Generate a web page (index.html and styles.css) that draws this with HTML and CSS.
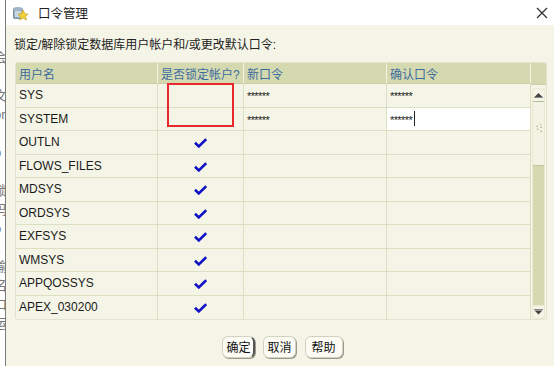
FILE: index.html
```html
<!DOCTYPE html>
<html lang="zh">
<head>
<meta charset="utf-8">
<link rel="stylesheet" href="styles.css">
</head>
<body>
<div class="backdrop">
  <div class="bg-text">
    <span>会</span><span>t</span><span>文</span><span>or</span><span>t</span><span>o</span><span>.</span><span>锁</span><span>吗</span><span>o</span><span>..</span><span>输</span><span>名</span><span>口</span><span>运</span>
  </div>
</div>
<div class="dialog">
  <div class="titlebar">
    <svg class="app-icon" width="16" height="16" viewBox="0 0 16 16">
      <rect x="1" y="3" width="10" height="11" rx="2" fill="#6f8fa8"/>
      <rect x="2.5" y="4.5" width="7" height="8" rx="1" fill="#c9d6e0"/>
      <ellipse cx="6" cy="4" rx="5" ry="2" fill="#9fb4c6"/>
      <polygon points="11,5 13,9 16,9 13.5,11.5 14.5,15 11,13 7.5,15 8.5,11.5 6,9 9,9" fill="#f2d23a" stroke="#b89a10" stroke-width="0.6"/>
    </svg>
    <span class="title">口令管理</span>
    <svg class="close" width="12" height="12" viewBox="0 0 12 12">
      <path d="M1 1 L11 11 M11 1 L1 11" stroke="#333" stroke-width="1.3"/>
    </svg>
  </div>
  <div class="content">
    <div class="subtitle">锁定/解除锁定数据库用户帐户和/或更改默认口令:</div>
    <div class="table-wrap">
      <div class="grid">
        <div class="hcell">用户名</div>
        <div class="hcell">是否锁定帐户?</div>
        <div class="hcell">新口令</div>
        <div class="hcell">确认口令</div>

        <div class="cell">SYS</div>
        <div class="cell"></div>
        <div class="cell pw">******</div>
        <div class="cell pw">******</div>

        <div class="cell">SYSTEM</div>
        <div class="cell"></div>
        <div class="cell pw">******</div>
        <div class="cell pw editing">******<span class="caret"></span></div>

        <div class="cell">OUTLN</div>
        <div class="cell check"><svg class="tick" viewBox="0 0 13 10"><path d="M1 4.8 L4.8 8.4 L12.2 1.2"/></svg></div>
        <div class="cell"></div>
        <div class="cell"></div>

        <div class="cell">FLOWS_FILES</div>
        <div class="cell check"><svg class="tick" viewBox="0 0 13 10"><path d="M1 4.8 L4.8 8.4 L12.2 1.2"/></svg></div>
        <div class="cell"></div>
        <div class="cell"></div>

        <div class="cell">MDSYS</div>
        <div class="cell check"><svg class="tick" viewBox="0 0 13 10"><path d="M1 4.8 L4.8 8.4 L12.2 1.2"/></svg></div>
        <div class="cell"></div>
        <div class="cell"></div>

        <div class="cell">ORDSYS</div>
        <div class="cell check"><svg class="tick" viewBox="0 0 13 10"><path d="M1 4.8 L4.8 8.4 L12.2 1.2"/></svg></div>
        <div class="cell"></div>
        <div class="cell"></div>

        <div class="cell">EXFSYS</div>
        <div class="cell check"><svg class="tick" viewBox="0 0 13 10"><path d="M1 4.8 L4.8 8.4 L12.2 1.2"/></svg></div>
        <div class="cell"></div>
        <div class="cell"></div>

        <div class="cell">WMSYS</div>
        <div class="cell check"><svg class="tick" viewBox="0 0 13 10"><path d="M1 4.8 L4.8 8.4 L12.2 1.2"/></svg></div>
        <div class="cell"></div>
        <div class="cell"></div>

        <div class="cell">APPQOSSYS</div>
        <div class="cell check"><svg class="tick" viewBox="0 0 13 10"><path d="M1 4.8 L4.8 8.4 L12.2 1.2"/></svg></div>
        <div class="cell"></div>
        <div class="cell"></div>

        <div class="cell last">APEX_030200</div>
        <div class="cell last check"><svg class="tick" viewBox="0 0 13 10"><path d="M1 4.8 L4.8 8.4 L12.2 1.2"/></svg></div>
        <div class="cell last"></div>
        <div class="cell last"></div>
      </div>
      <div class="scroll">
        <div class="scroll-head"></div>
        <div class="scroll-track">
          <div class="sb-btn up"><svg width="9" height="6" viewBox="0 0 9 6"><polygon points="0.5,5 4.5,1 8.5,5" fill="#444"/><rect x="0" y="5" width="9" height="1" fill="#888"/></svg></div>
          <div class="thumb">
            <svg width="8" height="9" viewBox="0 0 8 9"><path d="M5 0.5 L6.5 0 M1.5 2.5 L3 2 M5.5 3.5 L7 3 M2 5.5 L3.5 5 M5.5 7.5 L7 7" stroke="#9aa080" stroke-width="1"/></svg>
          </div>
          <div class="sb-fill"></div>
          <div class="sb-btn down"><svg width="9" height="6" viewBox="0 0 9 6"><rect x="0" y="0" width="9" height="1" fill="#888"/><polygon points="0.5,1.5 8.5,1.5 4.5,5.5" fill="#444"/></svg></div>
        </div>
      </div>
      <div class="highlight"></div>
    </div>
    <div class="buttons">
      <button class="btn focus">确定</button>
      <button class="btn">取消</button>
      <button class="btn wide">帮助</button>
    </div>
  </div>
</div>
</body>
</html>
```

FILE: styles.css
```css
html, body {
  margin: 0;
  padding: 0;
  width: 554px;
  height: 366px;
  overflow: hidden;
  background: #f5f5e7;
  font-family: "Liberation Sans", "Noto Sans CJK SC", sans-serif;
  font-size: 12px;
  color: #111;
}

body {
  display: flex;
}

.backdrop {
  width: 5px;
  flex: none;
  background: #fff;
  border-right: 1px solid #7b7b7b;
  overflow: hidden;
  position: relative;
}

.bg-text {
  display: flex;
  flex-direction: column;
  margin-left: -6px;
  padding-top: 48px;
  color: #777;
  font-size: 13px;
  line-height: 19px;
}

.dialog {
  flex: 1;
  display: flex;
  flex-direction: column;
}

.titlebar {
  height: 25px;
  background: #fff;
  display: flex;
  align-items: center;
  padding-left: 6px;
  padding-right: 6px;
}

.app-icon {
  flex: none;
}

.title {
  margin-left: 10px;
  font-size: 12.5px;
  color: #222;
  flex: 1;
}

.close {
  flex: none;
}

.content {
  flex: 1;
  padding-left: 9px;
  display: flex;
  flex-direction: column;
}

.subtitle {
  margin-top: 12px;
  height: 17px;
  line-height: 17px;
  color: #222;
  margin-left: -1px;
}

.table-wrap {
  margin-top: 8px;
  width: 532px;
  display: flex;
  position: relative;
  border: 1px solid #e2e3cc;
  border-radius: 3px;
  box-sizing: border-box;
  height: 258px;
}

.grid {
  display: grid;
  grid-template-columns: 142px 86px 143px 144px;
  grid-template-rows: 21px repeat(10, 23.5px);
  align-content: start;
}

.hcell {
  background: #d4d9b0;
  color: #3d6c9e;
  padding-left: 3px;
  display: flex;
  align-items: center;
  border-right: 1px solid #f2f3e0;
  border-bottom: 1px solid #c9ceaa;
  white-space: nowrap;
  overflow: hidden;
}

.cell {
  display: flex;
  align-items: center;
  padding-left: 3px;
  border-right: 1px solid #dcdfc2;
  border-bottom: 1px solid #dcdfc2;
  white-space: nowrap;
  color: #1a1a1a;
}

.cell.last {
  border-bottom: none;
}

.cell.pw {
  font-size: 11px;
  letter-spacing: -0.6px;
  padding-top: 2px;
  box-sizing: border-box;
}

.cell.editing {
  background: #fff;
}

.caret {
  display: inline-block;
  width: 1px;
  height: 15px;
  background: #222;
  margin-left: 2px;
  margin-top: -2px;
}

.cell.check {
  justify-content: center;
  padding-left: 0;
  padding-top: 2px;
}

.tick {
  width: 13px;
  height: 10px;
  fill: none;
  stroke: #1010c4;
  stroke-width: 2.6;
  stroke-linejoin: miter;
}

.scroll {
  width: 15px;
  display: flex;
  flex-direction: column;
}

.scroll-head {
  height: 21px;
  background: #d4d9b0;
  border-bottom: 1px solid #c9ceaa;
  flex: none;
}

.scroll-track {
  flex: 1;
  margin: 3px 1px 0 1px;
  background: #d4d9b0;
  border: 1px solid #e8ead6;
  border-radius: 3px;
  display: flex;
  flex-direction: column;
  overflow: hidden;
}

.sb-btn {
  height: 12px;
  background: #f5f5e7;
  display: flex;
  align-items: center;
  justify-content: center;
  flex: none;
}

.sb-btn.up {
  border-bottom: 1px solid #b8bca0;
}

.thumb {
  height: 64px;
  background: #f3f3e3;
  border-bottom: 1px solid #c0c49f;
  display: flex;
  align-items: flex-start;
  justify-content: center;
  padding-top: 22px;
  box-sizing: border-box;
  flex: none;
}

.sb-fill {
  flex: 1;
}

.sb-btn.down {
  border-top: 1px solid #e8ead6;
}

.highlight {
  position: absolute;
  left: 151px;
  top: 20px;
  width: 67px;
  height: 44px;
  border: 2px solid #e8282c;
  box-sizing: border-box;
}

.buttons {
  display: flex;
  justify-content: center;
  gap: 8px;
  margin-top: 16px;
  padding-right: 4px;
}

.btn {
  font-family: "Noto Sans CJK SC", sans-serif;
  font-size: 12px;
  height: 22px;
  padding: 0 3px;
  background: #fbfbf4;
  border: 1px solid #d2d2c2;
  border-radius: 6px;
  box-shadow: 1px 1px 0 #9a9a8c;
  color: #111;
  line-height: 18px;
}

.btn.wide {
  padding: 0 6px;
  margin-left: 1px;
}

.btn.focus {
  border-right: 2px solid #555;
}
```
